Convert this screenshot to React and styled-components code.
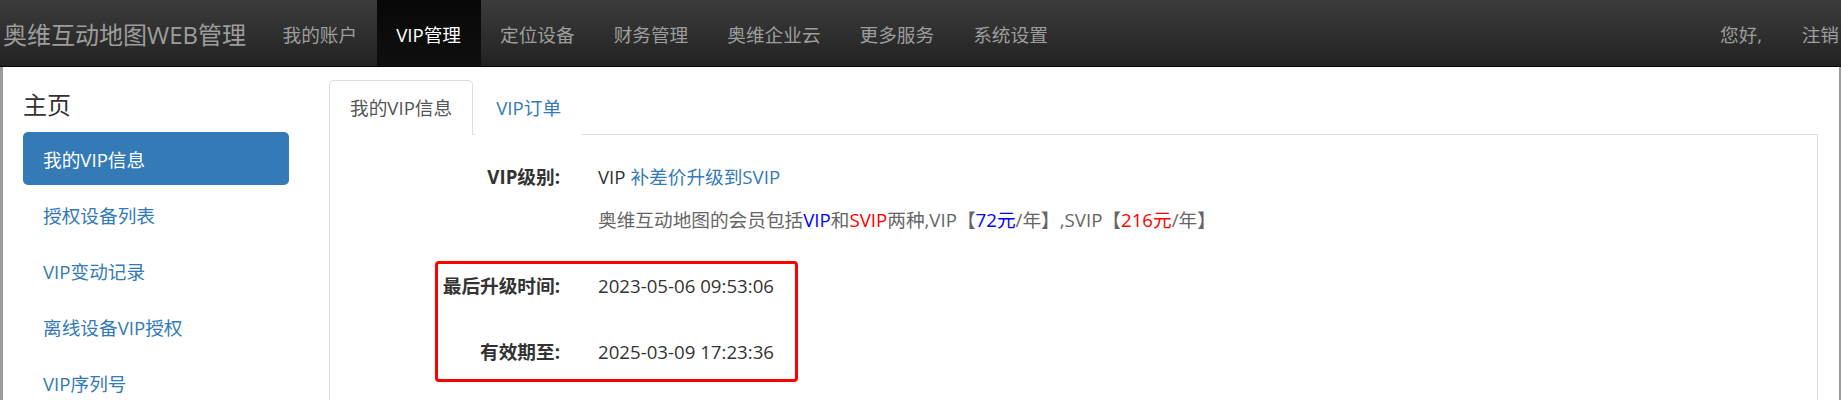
import React from "react";
import styled, { createGlobalStyle } from "styled-components";

const GlobalStyle = createGlobalStyle`
  body {
    margin: 0;
    background: #fff;
    color: #333;
    font-family: "Open Sans", "Noto Sans CJK SC", sans-serif;
  }
`;

const navItems = ["我的账户", "VIP管理", "定位设备", "财务管理", "奥维企业云", "更多服务", "系统设置"];
const sideItems = ["我的VIP信息", "授权设备列表", "VIP变动记录", "离线设备VIP授权", "VIP序列号"];

const App = () => {
  return (
    <>
      <GlobalStyle />
      <StyledNavbar>
        <StyledBrand>奥维互动地图WEB管理</StyledBrand>
        <StyledNavList>
          {navItems.map((n) => (
            <StyledNavItem key={n} $active={n === "VIP管理"}>
              {n}
            </StyledNavItem>
          ))}
        </StyledNavList>
        <StyledNavList $right>
          <StyledNavItem>您好,</StyledNavItem>
          <StyledNavItem $last>注销</StyledNavItem>
        </StyledNavList>
      </StyledNavbar>

      <StyledBody>
        <StyledSidebar>
          <StyledSideTitle>主页</StyledSideTitle>
          <StyledPills>
            {sideItems.map((s, i) => (
              <StyledPill key={s} $active={i === 0}>
                {s}
              </StyledPill>
            ))}
          </StyledPills>
        </StyledSidebar>

        <StyledMain>
          <StyledTabBar>
            <StyledTab $active>我的VIP信息</StyledTab>
            <StyledTab>VIP订单</StyledTab>
          </StyledTabBar>
          <StyledPanel>
            <StyledFieldList>
              <StyledFormGroup>
                <StyledLabel>VIP级别:</StyledLabel>
                <StyledValue>
                  <div>
                    VIP <StyledLink>补差价升级到SVIP</StyledLink>
                  </div>
                  <StyledNote>
                    奥维互动地图的会员包括<StyledColor $c="#0000ff">VIP</StyledColor>和
                    <StyledColor $c="#ff0000">SVIP</StyledColor>两种,VIP【
                    <StyledColor $c="#0000ff">72元</StyledColor>/年】,SVIP【
                    <StyledColor $c="#ff0000">216元</StyledColor>/年】
                  </StyledNote>
                </StyledValue>
              </StyledFormGroup>

              <StyledHighlightGroup>
                <StyledFormGroup>
                  <StyledLabel>最后升级时间:</StyledLabel>
                  <StyledValue>2023-05-06 09:53:06</StyledValue>
                </StyledFormGroup>
                <StyledFormGroup>
                  <StyledLabel>有效期至:</StyledLabel>
                  <StyledValue>2025-03-09 17:23:36</StyledValue>
                </StyledFormGroup>
                {/* red annotation box drawn over the two rows */}
                <StyledMarker />
              </StyledHighlightGroup>
            </StyledFieldList>
          </StyledPanel>
        </StyledMain>
      </StyledBody>
    </>
  );
};

const StyledNavbar = styled.div`
  display: flex;
  height: 66px;
  background: linear-gradient(to bottom, #3c3c3c 0%, #222 100%);
  border-bottom: 1px solid #080808;
  overflow: hidden;
`;

const StyledBrand = styled.div`
  display: flex;
  align-items: center;
  padding: 0 17px 0 3px;
  font-size: 24px;
  color: #9d9d9d;
  white-space: nowrap;
`;

const StyledNavList = styled.div`
  display: flex;
  margin-left: ${(p) => (p.$right ? "auto" : "0")};
`;

const StyledNavItem = styled.div`
  display: flex;
  align-items: center;
  padding: ${(p) => (p.$last ? "0 2px 0 20px" : "0 19.5px")};
  font-size: 18.67px;
  white-space: nowrap;
  color: ${(p) => (p.$active ? "#fff" : "#9d9d9d")};
  background: ${(p) =>
    p.$active ? "linear-gradient(to bottom, #080808 0%, #0f0f0f 100%)" : "transparent"};
`;

const StyledBody = styled.div`
  display: flex;
  min-height: 340px;
  border-left: 3px solid #9c9c9c;
  border-right: 2px solid #9c9c9c;
`;

const StyledSidebar = styled.div`
  flex-shrink: 0;
  width: 266px;
  padding: 23px 40px 0 20px;
`;

const StyledSideTitle = styled.div`
  font-size: 24px;
  line-height: 30px;
  color: #333;
  margin-bottom: 12px;
`;

const StyledPills = styled.div`
  display: flex;
  flex-direction: column;
  gap: 3px;
`;

const StyledPill = styled.div`
  height: 53px;
  display: flex;
  align-items: center;
  padding-left: 20px;
  border-radius: 5px;
  font-size: 18.67px;
  color: ${(p) => (p.$active ? "#fff" : "#337ab7")};
  background: ${(p) => (p.$active ? "#337ab7" : "transparent")};
`;

const StyledMain = styled.div`
  flex: 1;
  min-width: 0;
  padding: 13px 21px 0 0;
`;

const StyledTabBar = styled.div`
  display: flex;
  border-bottom: 1px solid #ddd;
`;

const StyledTab = styled.div`
  margin-bottom: -1px;
  margin-right: 2px;
  padding: 13.5px 20px;
  font-size: 18.67px;
  line-height: 26px;
  border: 1px solid ${(p) => (p.$active ? "#ddd" : "transparent")};
  border-bottom-color: transparent;
  border-radius: 5px 5px 0 0;
  background: #fff;
  color: ${(p) => (p.$active ? "#555" : "#337ab7")};
`;

const StyledPanel = styled.div`
  border: 1px solid #ddd;
  border-top: none;
  padding: 29px 0 60px;
`;

const StyledFieldList = styled.div`
  display: flex;
  flex-direction: column;
  gap: 40px;
`;

const StyledFormGroup = styled.div`
  display: grid;
  grid-template-columns: 230px 1fr;
  column-gap: 38px;
  font-size: 18.67px;
  line-height: 26px;
`;

const StyledLabel = styled.div`
  text-align: right;
  font-weight: bold;
  color: #333;
`;

const StyledValue = styled.div`
  display: flex;
  flex-direction: column;
  gap: 17px;
  color: #333;
`;

const StyledLink = styled.span`
  color: #337ab7;
`;

const StyledNote = styled.div`
  color: #666;
`;

const StyledColor = styled.span`
  color: ${(p) => p.$c};
`;

const StyledHighlightGroup = styled.div`
  position: relative;
  display: flex;
  flex-direction: column;
  gap: 40px;
`;

const StyledMarker = styled.div`
  position: absolute;
  left: 105px;
  top: -12px;
  width: 363px;
  height: 121px;
  box-sizing: border-box;
  border: 3px solid #ff0000;
  border-radius: 4px;
  pointer-events: none;
`;

export default App;
